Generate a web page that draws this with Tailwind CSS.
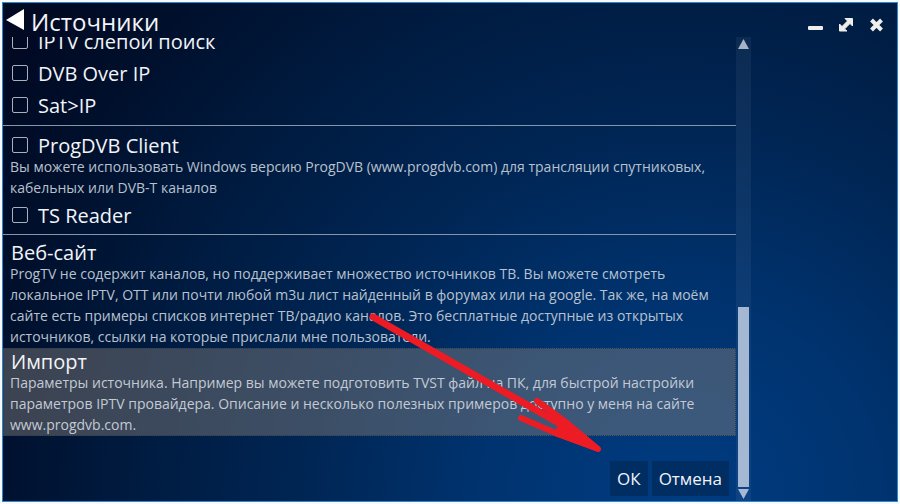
<!DOCTYPE html>
<html lang="ru">
<head>
  <meta charset="UTF-8">
  <title>Источники</title>
  <meta name="viewport" content="width=device-width, initial-scale=1.0">

  <script src="https://cdn.jsdelivr.net/npm/@tailwindcss/browser@4"></script>
</head>
<body class="bg-[#f4fafe] h-screen p-[2px] font-['Open_Sans','Noto_Sans',sans-serif] overflow-hidden">

  <div class="relative h-full flex flex-col overflow-hidden border border-[#2f86c8] text-[#f2f4f8] bg-[radial-gradient(ellipse_90%_160%_at_76%_100%,#003c82_0%,#00336f_25%,#002553_48%,#001b40_68%,#000f2b_88%,#010923_100%)]">

    <header class="h-[34px] shrink-0 flex items-start justify-between pr-3">
      <div class="flex items-start pl-[3px]">
        <button type="button" aria-label="Назад" class="pt-[5px]">
          <svg class="w-[18px] h-[22px]" viewBox="0 0 18 22" fill="#fff"><path d="M18 1v21L0 12z"/></svg>
        </button>
        <h1 class="pl-[7px] pt-[5px] text-2xl leading-7">Источники</h1>
      </div>
      <div class="flex items-center gap-[15px] pt-3.5">
        <button type="button" aria-label="Свернуть">
          <svg class="w-4 h-4" viewBox="0 0 16 16"><rect x="1" y="9" width="15" height="4" rx="1" fill="#eeeeec"/></svg>
        </button>
        <button type="button" aria-label="Развернуть">
          <svg class="w-4 h-4" viewBox="0 0 16 16" fill="#eeeeec"><path d="M7 1.500H14.500V9L12 6.500 6.500 12 9 14H1.500V7L4 9.500 9.500 4z" stroke="#eeeeec" stroke-width="1" stroke-linejoin="round"/></svg>
        </button>
        <button type="button" aria-label="Закрыть">
          <svg class="w-4 h-4" viewBox="0 0 16 16" stroke="#eeeeec" stroke-width="4"><path d="M2.500 3l10 10M12.500 3L2.500 13"/></svg>
        </button>
      </div>
    </header>

    <div class="flex flex-1 min-h-0">
      <main class="w-[82%] flex flex-col overflow-hidden">

        <section class="-mt-[11px] pb-[3px] border-b border-[#8795aa]">
          <label class="h-8 flex items-center gap-2.5 pl-[9px] text-xl">
            <input type="checkbox" class="appearance-none w-4 h-4 mb-0.5 border border-[#a9b0bc] rounded-xs">
            IPTV слепой поиск
          </label>
          <label class="h-8 flex items-center gap-2.5 pl-[9px] text-xl">
            <input type="checkbox" class="appearance-none w-4 h-4 mb-0.5 border border-[#a9b0bc] rounded-xs">
            DVB Over IP
          </label>
          <label class="h-8 flex items-center gap-2.5 pl-[9px] text-xl">
            <input type="checkbox" class="appearance-none w-4 h-4 mb-0.5 border border-[#a9b0bc] rounded-xs">
            Sat&gt;IP
          </label>
        </section>

        <section class="pt-1 pb-0.5 border-b border-[#8795aa]">
          <label class="h-[26px] flex items-center gap-2.5 pt-1.5 pl-[9px] text-xl">
            <input type="checkbox" class="appearance-none w-4 h-4 mb-0.5 border border-[#a9b0bc] rounded-xs">
            ProgDVB Client
          </label>
          <p class="pl-[7px] pb-0.5 text-sm leading-[21px] text-[#b9c1ce] whitespace-nowrap">
            Вы можете использовать Windows версию ProgDVB (www.progdvb.com) для трансляции спутниковых,<br>
            кабельных или DVB-T каналов
          </p>
          <label class="h-8 flex items-center gap-2.5 pl-[9px] text-xl">
            <input type="checkbox" class="appearance-none w-4 h-4 mb-0.5 border border-[#a9b0bc] rounded-xs">
            TS Reader
          </label>
        </section>

        <section class="pt-2 pb-px">
          <h2 class="pl-2 text-xl leading-5">Веб-сайт</h2>
          <p class="pl-[7px] text-sm leading-[21px] text-[#b9c1ce] whitespace-nowrap">
            ProgTV не содержит каналов, но поддерживает множество источников ТВ. Вы можете смотреть<br>
            локальное IPTV, ОТТ или почти любой m3u лист найденный в форумах или на google. Так же, на моём<br>
            сайте есть примеры списков интернет ТВ/радио каналов. Это бесплатные доступные из открытых<br>
            источников, ссылки на которые прислали мне пользователи.
          </p>
        </section>

        <section class="pt-1 pb-px bg-[#85807c]/45 outline outline-dotted -outline-offset-1 outline-[#2d3a4c]">
          <h2 class="pl-2 text-xl leading-5">Импорт</h2>
          <p class="pl-[7px] text-sm leading-[21px] text-[#c3cad4] whitespace-nowrap">
            Параметры источника. Например вы можете подготовить TVST файл на ПК, для быстрой настройки<br>
            параметров IPTV провайдера. Описание и несколько полезных примеров доступно у меня на сайте<br>
            www.progdvb.com.
          </p>
        </section>

        <div class="mt-auto flex justify-end gap-1 pr-[7px] pb-[5px]">
          <button type="button" class="h-[35px] px-[7px] bg-[#002d62] text-[17px]">ОК</button>
          <button type="button" class="h-[35px] px-[7px] bg-[#002d62] text-[17px]">Отмена</button>
        </div>
      </main>

      <div class="w-[15px] flex flex-col items-center bg-white/5 py-0.5">
        <svg class="w-[11px] h-[10px] shrink-0" viewBox="0 0 11 10" fill="#a6b3c6"><path d="M5.500 0L11 10H0z"/></svg>
        <div class="flex-1 w-[11px] flex flex-col justify-end pb-0.5">
          <div class="h-[41%] bg-[#a5b8d3]"></div>
        </div>
        <svg class="w-[11px] h-[10px] shrink-0" viewBox="0 0 11 10" fill="#a6b8d3"><path d="M5.500 10L11 0H0z"/></svg>
      </div>
    </div>

    <!-- red arrow pointing at OK -->
    <svg class="absolute left-[361px] top-[304px] w-[240px] h-[150px] pointer-events-none" viewBox="0 0 240 150" fill="none" stroke="#ed1c24" stroke-width="6" stroke-linecap="round" stroke-linejoin="round">
      <path stroke-width="7" d="M9 10L200 119"/>
      <path d="M173 94L203 116 234 142 194 127 157 111"/>
      <path fill="#ed1c24" stroke-width="5" d="M199 115L234 142 192 127z"/>
    </svg>
  </div>

</body>
</html>
